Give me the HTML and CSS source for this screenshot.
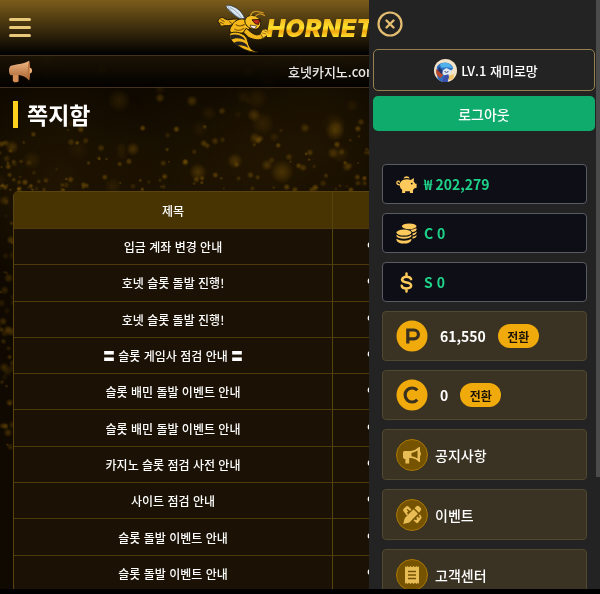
FILE: index.html
```html
<!DOCTYPE html>
<html lang="ko">
  <head>
    <meta charset="UTF-8" />
    <meta name="viewport" content="width=device-width, initial-scale=1.0" />
    <title>쪽지함</title>
    <link rel="stylesheet" href="styles.css">
  </head>
  <body>
    <div class="app">
      <canvas class="dust" id="dust"></canvas>

      <header class="header">
        <button type="button" class="menu-btn" aria-label="메뉴">
          <span></span><span></span><span></span>
        </button>
        <a href="#" class="logo">
          <svg class="logo-bee" viewBox="0 0 165 150" aria-hidden="true">
            <path d="M78 48C62 42 38 22 30 10C34 2 48 6 62 14C76 22 84 36 88 46Z" fill="#dfe9f2" stroke="#3b4650" stroke-width="3"/>
            <path d="M42 12C56 18 70 32 80 46M36 8C42 22 58 36 74 45" fill="none" stroke="#8fa6b8" stroke-width="3"/>
            <path d="M74 50C58 44 46 50 36 50L25 46C20 40 10 44 8 50C4 54 6 60 12 62C10 68 16 72 24 68C34 68 44 68 52 64L76 66Z" fill="#f2b51b" stroke="#1c1503" stroke-width="3"/>
            <path d="M14 49L26 56M11 57L23 62M40 55L50 62" stroke="#6d4a05" stroke-width="3"/>
            <path d="M48 68C58 46 84 42 102 54C112 66 104 78 92 86C76 94 56 92 46 90C40 84 42 76 48 68Z" fill="#f5b91c" stroke="#1c1503" stroke-width="3"/>
            <path d="M60 64C68 70 78 70 88 64M56 78C66 84 78 82 86 76" fill="none" stroke="#8a5f08" stroke-width="4"/>
            <path d="M42 92C54 84 76 88 88 98C100 108 96 128 108 140C116 146 122 146 128 149C108 150 86 142 72 132C54 124 38 108 42 92Z" fill="#f3b61b" stroke="#1c1503" stroke-width="3"/>
            <path d="M42 98C56 92 72 94 84 104L90 113C74 104 58 104 46 111ZM54 121C68 113 84 116 94 126L99 136C86 127 72 126 64 129Z" fill="#25221f"/>
            <path d="M92 76C100 80 108 92 120 95C128 98 138 94 142 84L152 82C158 86 154 98 148 104C134 116 114 110 100 104L84 88Z" fill="#f2b51b" stroke="#1c1503" stroke-width="3"/>
            <path d="M136 92L142 80L152 78L160 84L157 97L144 106Z" fill="#ffc82e" stroke="#3a2a05" stroke-width="2"/>
            <path d="M141 90L153 93M145 83L156 87" stroke="#6d4a05" stroke-width="2"/>
            <path d="M88 52C92 38 108 32 122 40C134 44 138 54 136 66C132 76 122 82 112 78C100 76 88 66 88 52Z" fill="#f7c022" stroke="#1c1503" stroke-width="3"/>
            <path d="M110 50L134 49L130 64L120 62Z" fill="#c62a1d" stroke="#331006" stroke-width="3"/>
            <path d="M104 66L124 69L119 77L108 74Z" fill="#fff" stroke="#331006" stroke-width="2"/>
            <path d="M106 38C108 24 120 20 144 29M120 40C128 30 138 30 148 37" fill="none" stroke="#c99421" stroke-width="4" stroke-linecap="round"/>
          </svg>
          <span class="logo-text">HORNET</span>
        </a>
      </header>

      <div class="notice">
        <svg class="notice-icon" viewBox="0 0 24 24" aria-hidden="true">
          <defs>
            <linearGradient id="horn" x1="0" y1="0" x2="0" y2="1">
              <stop offset="0" stop-color="#f2b988"/>
              <stop offset="1" stop-color="#a5612c"/>
            </linearGradient>
          </defs>
          <path d="M4 14h6v8.500l-2 .8H5.500L4 22z" fill="#d38d55"/>
          <path d="M2 6l7-1.500C14 4 18 2.500 21 .7v20.600C18 18 14 16 9 15.500L2 16Q0 15 0 11T2 6z" fill="url(#horn)"/>
          <path d="M21 .7c1.500 3 1.500 17 0 20.600-1.800-5-1.800-15 0-20.600z" fill="#b9713b"/>
          <path d="M21.500 8q2.500 0 2.500 3t-2.500 3z" fill="#f0b27a"/>
        </svg>
        <p class="notice-text">호넷카지노.com</p>
      </div>

      <main class="page">
        <h1 class="page-title">쪽지함</h1>
        <table class="messages">
          <thead>
            <tr><th>제목</th><th>구분</th><th>작성일</th></tr>
          </thead>
          <tbody>
            <tr><td>입금 계좌 변경 안내</td><td>안읽음</td><td></td></tr>
            <tr><td>호넷 슬롯 돌발 진행!</td><td>안읽음</td><td></td></tr>
            <tr><td>호넷 슬롯 돌발 진행!</td><td>안읽음</td><td></td></tr>
            <tr><td>〓 슬롯 게임사 점검 안내 〓</td><td>안읽음</td><td></td></tr>
            <tr><td>슬롯 배민 돌발 이벤트 안내</td><td>안읽음</td><td></td></tr>
            <tr><td>슬롯 배민 돌발 이벤트 안내</td><td>안읽음</td><td></td></tr>
            <tr><td>카지노 슬롯 점검 사전 안내</td><td>안읽음</td><td></td></tr>
            <tr><td>사이트 점검 안내</td><td>안읽음</td><td></td></tr>
            <tr><td>슬롯 돌발 이벤트 안내</td><td>안읽음</td><td></td></tr>
            <tr><td>슬롯 돌발 이벤트 안내</td><td>안읽음</td><td></td></tr>
          </tbody>
        </table>
      </main>

      <aside class="drawer">
        <button type="button" class="close-btn" aria-label="닫기">
          <svg viewBox="0 0 26 26" aria-hidden="true">
            <circle cx="13" cy="13" r="11.500" fill="none" stroke="#e4bd70" stroke-width="2.200"/>
            <path d="M9.500 9.500l7 7M16.500 9.500l-7 7" stroke="#e4bd70" stroke-width="2.400" stroke-linecap="round"/>
          </svg>
        </button>

        <div class="user">
          <svg class="avatar" viewBox="0 0 24 24" aria-hidden="true">
            <defs><clipPath id="round"><circle cx="12" cy="12" r="12"/></clipPath></defs>
            <g clip-path="url(#round)">
              <path d="M0 0h24v24H0z" fill="#f3e3c8"/>
              <path d="M3 8Q6 3 13 4q6 1 7 6l-3 3-4 3 2 8H5Q2 16 3 8z" fill="#2c6fc0"/>
              <path d="M6 6q5-4 10-1l4 5-6-1.500L8 9z" fill="#4fb2ea"/>
              <path d="M9 12l4-2.500 5 2.500-1 4-4 2-4-2z" fill="#dfe8f2"/>
              <path d="M2 11l5 1 2.500 5-3 3-4-4z" fill="#b9482c"/>
              <path d="M5 8l4 4-1 4-4-4z" fill="#26356f"/>
              <path d="M11 17l4-1 1 4-3 4H8z" fill="#3a4fa8"/>
              <path d="M15 22l1-5 5-1-1 5z" fill="#f0c56a"/>
              <path d="M11 13l2 1 2-1" fill="none" stroke="#26356f"/>
            </g>
          </svg>
          <span>LV.1 재미로망</span>
        </div>
        <button type="button" class="logout">로그아웃</button>

        <ul class="cards">
          <li class="wallet">
            <svg class="wallet-icon" viewBox="0 0 22 22" aria-hidden="true">
              <path d="M7.800 4.600a3.500 3.500 0 0 1 6.600 0q-3.300-.8-6.600 0z" fill="#fdca5b"/>
              <path d="M8 6q3.500-1 7.500.2L18.800 4.200 18.600 8q1.200 1 1.600 2.200H21.600v4.200L19.500 15l-1.700 1.800V20h-3.200v-2H9.600v2H6.400v-3.500Q4 14.500 3.700 11.500 4.300 7.500 8 6z" fill="#fdca5b"/>
              <path d="M4 11.500Q.8 11.200.9 8.900q.2-1.600 2-1.400 1 .5.3 1.600" fill="none" stroke="#fdca5b" stroke-width="1.300"/>
              <circle cx="16.500" cy="10" r=".9" fill="#0e0e16"/>
            </svg>
            <span>₩ 202,279</span>
          </li>
          <li class="wallet">
            <svg class="wallet-icon" viewBox="0 0 22 22" aria-hidden="true">
              <g fill="#fdca5b">
                <ellipse cx="13.800" cy="3.500" rx="7.700" ry="3"/>
                <path d="M15 7.200q4-.2 6.500-2v1.500q-.5 2.200-4.500 2.800zM17.300 11q3-.5 4.200-2v1.500q-.5 1.800-4.200 2.500zM17.300 14.500q3-.5 4.200-2V14q-.5 1.800-4.200 2.500z"/>
                <ellipse cx="8.300" cy="10" rx="7.800" ry="3.200"/>
                <path d="M.5 12.200q3 2.300 7.800 2.300t7.800-2.300V14q-1.500 2.600-7.800 2.600T.5 14z"/>
                <path d="M.5 16.500q3 2.200 7.800 2.200t7.800-2.200V18q-1.500 3.500-7.800 3.500T.5 18z"/>
              </g>
            </svg>
            <span>C 0</span>
          </li>
          <li class="wallet">
            <svg class="wallet-icon" viewBox="0 0 22 22" aria-hidden="true">
              <path d="M11 1.500v3M11 17.500v3M15.800 7.500Q14.800 4.900 11 4.900T6.300 7.900Q6.300 10.200 11 11T15.900 14.200Q15.800 17.200 11 17.200T6 14.300" fill="none" stroke="#fdca5b" stroke-width="2.600" stroke-linecap="round"/>
            </svg>
            <span>S 0</span>
          </li>

          <li class="card point">
            <svg class="card-icon" viewBox="0 0 32 32" aria-hidden="true">
              <circle cx="16" cy="16" r="15.500" fill="#f0aa0c"/>
              <path d="M11.800 23.500V10H18a4.400 4.400 0 0 1 0 8.800h-6" fill="none" stroke="#3a3020" stroke-width="3.200"/>
            </svg>
            <span>61,550</span>
            <button type="button" class="convert">전환</button>
          </li>
          <li class="card point">
            <svg class="card-icon" viewBox="0 0 32 32" aria-hidden="true">
              <circle cx="16" cy="16" r="15.500" fill="#f0aa0c"/>
              <path d="M21.300 11.300a7 7 0 1 0 0 9.400" fill="none" stroke="#3a3020" stroke-width="3.200"/>
            </svg>
            <span>0</span>
            <button type="button" class="convert">전환</button>
          </li>

          <li>
            <a href="#" class="card">
              <svg class="card-icon" viewBox="0 0 32 32" aria-hidden="true">
                <circle cx="16" cy="16" r="15.500" fill="#755300" stroke="#a97805"/>
                <path d="M8.500 12h6.300q5-.8 8.200-4H24v4.500q1.800 1.500 0 5V23h-1q-3-3.600-8-4h-1.800v5.500H9.400V20H8.500Q7 19.500 7 18v-4.500Q7 12.200 8.500 12z" fill="#e9bd55"/>
                <path d="M15.500 14q3.500-.6 6-2.500v8q-2.500-1.700-6-2.200z" fill="#755300"/>
              </svg>
              <span>공지사항</span>
            </a>
          </li>
          <li>
            <a href="#" class="card">
              <svg class="card-icon" viewBox="0 0 32 32" aria-hidden="true">
                <circle cx="16" cy="16" r="15.500" fill="#755300" stroke="#a97805"/>
                <g fill="#e9bd55">
                  <path d="M7 11.500Q7 10 8.500 9l2-1.700q1-.6 2 .2l3 3-1.500 1.500-2.500-2-.8.800 1.600 1.600-1.400 1.400 1.200 1.700-1.200 1.200zM17.500 21.500l1.300-1.300 1.200 1 1.200-1.200-1-1.300 1.300-1.200 1.500 1.500.9-.9-1.100-1.400 1-1.400 1.400 2q.8 1.300 0 2.300l-3 4q-1 1-2 .2z"/>
                  <path d="M7.200 25l1.600-6 8.700-8.700 4.500 4.500-8.700 8.700z"/>
                  <path d="M18.500 9.300l2-2q1.300-1 2.500 0l1.700 1.700q1 1.200 0 2.500l-1.700 2.300z"/>
                </g>
              </svg>
              <span>이벤트</span>
            </a>
          </li>
          <li>
            <a href="#" class="card">
              <svg class="card-icon" viewBox="0 0 32 32" aria-hidden="true">
                <circle cx="16" cy="16" r="15.500" fill="#755300" stroke="#a97805"/>
                <path d="M9 7l1.200 1.200L11.500 7l1.500 1.200L14.500 7 16 8.200 17.500 7 19 8.200 20.500 7l1.300 1.200L23 7v18l-1.200-1.200-1.300 1.200-1.500-1.200-1.500 1.200-1.500-1.200-1.500 1.200-1.500-1.200-1.500 1.200-1.300-1.200L9 25z" fill="#e9bd55"/>
                <path d="M12 12.500h8M12 16h8M12 19.500h8" stroke="#755300" stroke-width="1.300"/>
              </svg>
              <span>고객센터</span>
            </a>
          </li>
        </ul>
        <div class="drawer-scroll"></div>
      </aside>
    </div>

    <script src="script.js"></script>
  </body>
</html>
```

FILE: styles.css
```css
* {
  box-sizing: border-box;
}

body {
  margin: 0;
  background-color: #000;
  color: #fff;
  font-family: "Noto Sans CJK KR", "Noto Sans", sans-serif;
  font-size: 12px;
  font-weight: 500;
}

button {
  padding: 0;
  border: none;
  background: none;
  color: inherit;
  font: inherit;
  cursor: pointer;
}

a {
  color: inherit;
  text-decoration: none;
}

.app {
  position: relative;
  height: calc(100vh - 5px);
  overflow: hidden;
  background-color: #0f0901;
}

/* gold dust behind the page */
.dust {
  position: absolute;
  top: 0;
  left: 0;
}

/* header */
.header {
  position: relative;
  display: flex;
  align-items: center;
  height: 56px;
  padding: 0 9px;
  background: linear-gradient(#7c5c1b, #382a0c 55%, #000);
  border-bottom: 1px solid #43331b;
}

.menu-btn {
  display: flex;
  flex-direction: column;
  gap: 5px;
  width: 22px;
}

.menu-btn span {
  height: 3px;
  border-radius: 2px;
  background-color: #e8c879;
}

.logo {
  display: flex;
  align-items: center;
  margin: 0 auto;
  padding-right: 29px;
}

.logo-bee {
  width: 54px;
  height: 50px;
  margin-right: -3px;
}

.logo-text {
  padding-right: 4px;
  font-family: Inter, sans-serif;
  font-size: 25px;
  font-style: italic;
  font-weight: 900;
  line-height: 32px;
  color: transparent;
  background: linear-gradient(#f0b51c 20%, #ffe22e 50%, #f3a50d 60%, #ffe534 80%);
  -webkit-background-clip: text;
  background-clip: text;
}

.notice {
  position: relative;
  display: flex;
  align-items: center;
  height: 32px;
  background: linear-gradient(rgba(31, 22, 5, 0.8), rgba(0, 0, 0, 0.8));
  border-bottom: 1px solid #43331b;
}

.notice-icon {
  position: absolute;
  left: 9px;
  width: 23px;
  height: 23px;
}

.notice-text {
  margin: 0;
  padding-left: 48%;
  color: #e8e8e8;
  font-size: 13px;
}

/* message list */
.page {
  position: relative;
  padding: 13px;
}

.page-title {
  margin: 0 0 63px;
  padding-left: 9px;
  border-left: 5px solid #fdd11d;
  font-size: 23px;
  font-weight: 700;
  line-height: 27px;
}

.messages {
  width: 100%;
  height: 402px;
  table-layout: fixed;
  border: 1px solid #59430f;
  border-radius: 5px;
  border-spacing: 0;
  overflow: hidden;
  background-color: #1b1205;
}

.messages th,
.messages td {
  padding: 0;
  border-bottom: 1px solid #4d3a0c;
  border-right: 1px solid #57440a;
  text-align: center;
  font-weight: 500;
}

.messages th {
  height: 37px;
  background-color: #473402;
}

.messages th:first-child {
  width: 319px;
}

.messages th:nth-child(2) {
  width: 102px;
}

/* side drawer */
.drawer {
  position: absolute;
  top: 0;
  right: 0;
  bottom: 0;
  width: 231px;
  padding: 11px 5px 0 4px;
  overflow: hidden;
  background-color: #232323;
}

.close-btn {
  display: block;
  width: 26px;
  height: 26px;
  margin: 0 0 12px 4px;
}

.close-btn svg {
  display: block;
}

.user {
  display: flex;
  align-items: center;
  justify-content: center;
  gap: 4px;
  height: 42px;
  margin-bottom: 5px;
  padding-left: 4px;
  border: 1px solid #96804f;
  border-radius: 5px;
  font-size: 13px;
}

.avatar {
  width: 23px;
  height: 23px;
}

.logout {
  display: block;
  width: 100%;
  height: 35px;
  border-radius: 5px;
  background-color: #0fab6c;
  font-size: 14px;
}

.cards {
  display: flex;
  flex-direction: column;
  gap: 9px;
  margin: 33px 8px 0 9px;
  padding: 0;
  list-style: none;
}

.wallet,
.card {
  display: flex;
  align-items: center;
  padding: 0 13px;
  border: 1px solid #514830;
  border-radius: 4px;
}

.wallet {
  gap: 7px;
  height: 40px;
  border-color: #5a5a62;
  background-color: #0e0e16;
  color: #1ed28a;
  font-size: 14px;
  font-weight: 700;
}

.wallet-icon {
  width: 21px;
  height: 21px;
}

.card {
  gap: 7px;
  height: 51px;
  background-color: #3a3222;
  font-size: 14px;
}

.card-icon {
  width: 32px;
  height: 32px;
}

.point {
  gap: 12px;
  height: 50px;
  font-weight: 700;
}

.convert {
  width: 41px;
  height: 24px;
  border-radius: 12px;
  background-color: #f0aa0c;
  color: #1b1405;
  font-size: 12px;
}

.drawer-scroll {
  position: absolute;
  top: 0;
  right: 0;
  width: 4px;
  height: 477px;
  background-color: #4b4b4b;
}
```

FILE: script.js
```js
const canvas = document.getElementById("dust");
const app = canvas.parentElement;
canvas.width = app.clientWidth;
canvas.height = app.clientHeight;
const ctx = canvas.getContext("2d");

// fixed seed so the dust looks the same on every load
let seed = 7;
function rand() {
  seed = (seed * 16807) % 2147483647;
  return seed / 2147483647;
}

function dot(x, y, r, alpha) {
  const glow = ctx.createRadialGradient(x, y, 0, x, y, r);
  glow.addColorStop(0, "rgba(140, 98, 10, " + alpha + ")");
  glow.addColorStop(0.5, "rgba(120, 82, 6, " + alpha * 0.7 + ")");
  glow.addColorStop(1, "rgba(110, 74, 0, 0)");
  ctx.fillStyle = glow;
  ctx.fillRect(x - r, y - r, r * 2, r * 2);
}

// wide warm haze
dot(60, 180, 110, 0.14);
dot(200, 180, 110, 0.12);
dot(310, 150, 110, 0.14);

// soft spots
for (let i = 0; i < 70; i++) {
  dot(rand() * canvas.width, 60 + rand() * 130, 4 + rand() * 8, 0.08 + rand() * 0.12);
}

// small grains, dense just above the table
for (let i = 0; i < 190; i++) {
  const x = Math.pow(rand(), 1.4) * canvas.width;
  const y = 190 - Math.pow(rand(), 1.8) * 65;
  dot(x, y, 1.5 + rand() * 2.5, 0.25 + rand() * 0.4);
}

// the same dust running down the left margin
for (let i = 0; i < 45; i++) {
  dot(rand() * 13, 190 + rand() * 260, 1.5 + rand() * 4, 0.15 + rand() * 0.3);
}

// brighter single spots
[
  [160, 98, 5], [192, 101, 6], [222, 111, 4], [215, 141, 4], [254, 115, 7],
  [305, 128, 5], [335, 131, 10], [361, 122, 4], [289, 157, 4], [333, 153, 6],
  [133, 149, 7], [71, 142, 4], [12, 147, 7], [101, 148, 4], [282, 172, 12],
  [198, 172, 9], [347, 167, 5], [235, 161, 8], [255, 138, 6], [267, 165, 6]
].forEach(function (p) {
  dot(p[0], p[1], p[2], 0.4);
});
```
